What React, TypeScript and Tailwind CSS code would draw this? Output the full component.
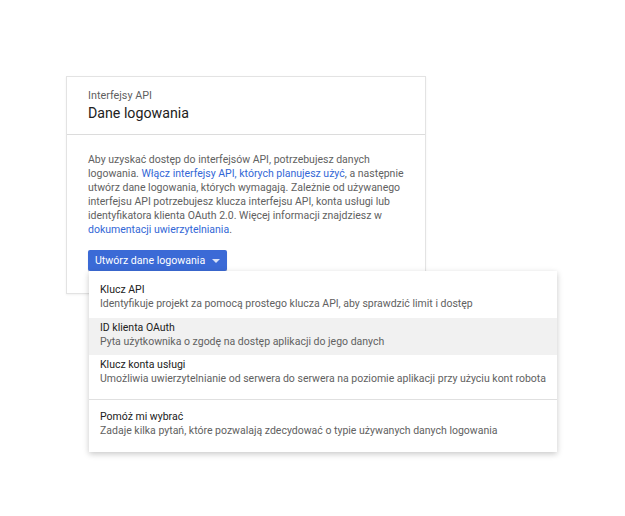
import React from "react";

const items = [
  {
    title: "Klucz API",
    desc: "Identyfikuje projekt za pomocą prostego klucza API, aby sprawdzić limit i dostęp",
  },
  {
    title: "ID klienta OAuth",
    desc: "Pyta użytkownika o zgodę na dostęp aplikacji do jego danych",
    active: true,
  },
  {
    title: "Klucz konta usługi",
    desc: "Umożliwia uwierzytelnianie od serwera do serwera na poziomie aplikacji przy użyciu kont robota",
  },
];

function MenuItem({ title, desc, active }: { title: string; desc: string; active?: boolean }) {
  return (
    <div className={`h-[37.5px] px-[11px] pt-[3px] ${active ? "bg-[#f1f1f1]" : ""}`}>
      <div className="text-[10.5px] leading-[14px] text-[#212121]">{title}</div>
      <div className="text-[10.5px] leading-[14px] text-[#616161] whitespace-nowrap">{desc}</div>
    </div>
  );
}

export default function App() {
  return (
    <div
      className="w-[625px] h-[516px] bg-white pt-[76px] pl-[66px]"
      style={{ fontFamily: "Roboto, 'Noto Sans', sans-serif" }}
    >
      <div className="relative w-[360px] border border-[#e3e3e3] bg-white shadow-[0_1px_2px_rgba(0,0,0,0.06)]">
        <div className="px-[21px] pt-[12px] pb-[11px] border-b border-[#dcdcdc]">
          <div className="text-[10.8px] leading-[14px] text-[#5f5f5f]">Interfejsy API</div>
          <div className="text-[14.2px] leading-[20px] text-[#212121]">Dane logowania</div>
        </div>
        <div className="px-[21px] pt-[18px] pb-[22px]">
          <p className="text-[10.5px] leading-[14px] text-[#616161]">
            Aby uzyskać dostęp do interfejsów API, potrzebujesz danych logowania.{" "}
            <span className="text-[#3367d6]">Włącz interfejsy API, których planujesz użyć</span>, a
            następnie utwórz dane logowania, których wymagają. Zależnie od używanego interfejsu API
            potrzebujesz klucza interfejsu API, konta usługi lub identyfikatora klienta OAuth 2.0.
            Więcej informacji znajdziesz w{" "}
            <span className="text-[#3367d6]">dokumentacji uwierzytelniania</span>.
          </p>
          <div className="relative mt-[13px]">
            <button className="flex items-center h-[21px] pl-[7px] pr-[7px] bg-[#3b6ad6] text-white text-[10.6px] rounded-[2px] shadow-[0_1px_1px_rgba(0,0,0,0.2)]">
              Utwórz dane logowania
              <svg width="8" height="4" viewBox="0 0 8 4" className="ml-[7px]">
                <path d="M0 0h8L4 4z" fill="#ffffff" fillOpacity="0.8" />
              </svg>
            </button>
            <div className="absolute left-[1px] top-[21px] w-[468px] bg-white pt-[9px] pb-[8px] shadow-[0_2px_6px_rgba(0,0,0,0.22)] z-10">
              {items.map((it) => (
                <MenuItem key={it.title} {...it} />
              ))}
              <div className="mt-[6px] mb-[7px] border-t border-[#e0e0e0]" />
              <MenuItem
                title="Pomóż mi wybrać"
                desc="Zadaje kilka pytań, które pozwalają zdecydować o typie używanych danych logowania"
              />
            </div>
          </div>
        </div>
      </div>
    </div>
  );
}
